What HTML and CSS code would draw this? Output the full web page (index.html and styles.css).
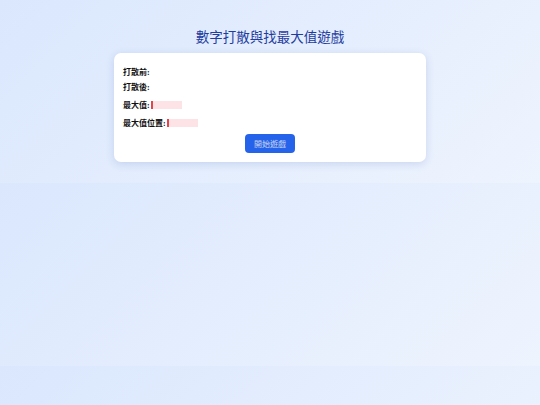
FILE: index.html
```html
<!DOCTYPE html>
<html lang="zh-Hant">
<head>
    <meta charset="UTF-8">
    <meta name="viewport" content="width=device-width, initial-scale=1.0">
    <title>數字打散與找最大值遊戲</title>
    <link rel="stylesheet" href="styles.css">
</head>
<body>
    <h1>數字打散與找最大值遊戲</h1>

    <div class="card">
        <p class="row">打散前:<span id="before"></span></p>
        <p class="row second">打散後:<span id="after"></span></p>
        <p class="row tall">最大值:<span class="result" id="maxValue"></span></p>
        <p class="row tall last">最大值位置:<span class="result" id="maxIndex"></span></p>
        <div class="actions">
            <button id="startBtn">開始遊戲</button>
        </div>
    </div>
</body>
</html>
```

FILE: styles.css
```css
* {
    box-sizing: border-box;
    margin: 0;
    padding: 0;
}

body {
    background: linear-gradient(135deg, #dae7fd, #eef4fe);
    font-family: "Liberation Serif", "Noto Sans CJK TC", serif;
    padding: 26px 0 21px;
}

h1 {
    font-family: "Noto Sans CJK TC", sans-serif;
    font-size: 13.5px;
    line-height: 20px;
    font-weight: normal;
    color: #1f3c9e;
    text-align: center;
    margin-bottom: 7px;
}

.card {
    width: 312px;
    margin: 0 auto;
    background-color: #fff;
    border-radius: 7px;
    padding: 14px 9px 9px;
    box-shadow: 0 2px 8px rgba(37, 68, 160, 0.16);
}

.row {
    font-size: 8px;
    line-height: 12px;
    font-weight: bold;
    color: #111;
    margin-bottom: 3px;
}

.row.second {
    margin-bottom: 6px;
}

.row.tall {
    margin-top: 5px;
    margin-bottom: 6px;
}

.row.last {
    margin-bottom: 3px;
}

.result {
    display: inline-block;
    width: 31px;
    height: 8px;
    margin-left: 1px;
    background-color: #fde3e5;
    border-left: 2px solid #e0474c;
    vertical-align: -1px;
}

.actions {
    text-align: center;
}

button {
    width: 50px;
    height: 19px;
    background-color: #2563eb;
    border: none;
    border-radius: 4px;
    color: #c9d4ee;
    font-family: "Noto Sans CJK TC", sans-serif;
    font-size: 8px;
    cursor: pointer;
}
```
